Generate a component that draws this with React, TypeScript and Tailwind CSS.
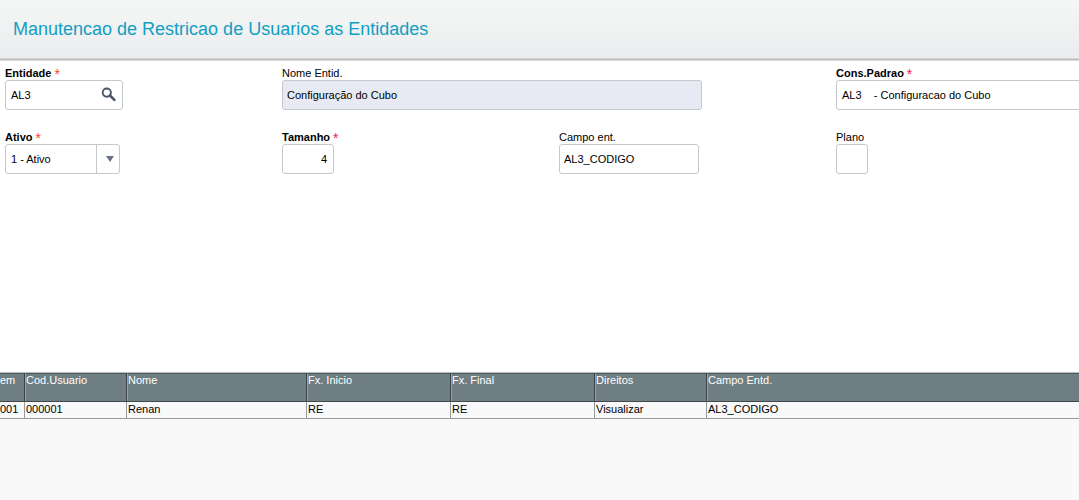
import type { ReactNode } from "react";

function Field({ label, star, bold, width, children }: { label: string; star?: string; bold?: boolean; width: string; children: ReactNode }) {
  return (
    <div className="h-16 w-[277px] shrink-0">
      <div className="flex h-[13px] gap-[3px] whitespace-pre leading-[13px]">
        <span className={bold ? "font-bold" : ""}>{label}</span>
        {star && <span className={`text-[14px] leading-[14px] ${star}`}>*</span>}
      </div>
      <div className={`flex h-[30px] items-center rounded-[3px] border border-[#c5c9ca] ${width}`}>{children}</div>
    </div>
  );
}

const columns = [
  { title: "em", value: "001", width: "w-[25px]", head: "", pad: "" },
  { title: "Cod.Usuario", value: "000001", width: "w-[102px]", head: "border-l", pad: "pl-px" },
  { title: "Nome", value: "Renan", width: "w-[180px]", head: "border-l", pad: "pl-px" },
  { title: "Fx. Inicio", value: "RE", width: "w-[144px]", head: "border-l", pad: "pl-px" },
  { title: "Fx. Final", value: "RE", width: "w-[144px]", head: "border-l", pad: "pl-px" },
  { title: "Direitos", value: "Visualizar", width: "w-[112px]", head: "border-l", pad: "pl-px" },
  { title: "Campo Entd.", value: "AL3_CODIGO", width: "w-[400px]", head: "border-l", pad: "pl-px" },
];

export default function App() {
  return (
    <div className="flex h-[500px] w-[1079px] flex-col overflow-hidden bg-white font-['Liberation_Sans',Arial,sans-serif] text-[11px] text-black">
      <header className="flex h-[61px] shrink-0 flex-col border-b border-[#dadada] bg-linear-to-b from-[#f5f7f6] to-[#ebecee]">
        <h1 className="flex-1 pl-[13px] pt-[18px] text-[18px] leading-[22px] text-[#129fc3]">Manutencao de Restricao de Usuarios as Entidades</h1>
        <div className="h-px bg-[#d5d6d7]" />
        <div className="h-px bg-[#bcbdbd]" />
      </header>
      <main className="h-[311px] shrink-0 pl-[5px] pt-[6px]">
        <div className="flex">
          <Field label="Entidade" star="text-[#ff3b20]" bold width="w-[118px] justify-between pl-[5px] pr-[5px]">
            <span>AL3</span>
            <svg className="h-4 w-4" viewBox="0 0 16 16" fill="none" stroke="#4b5768">
              <circle cx="5.8" cy="5.6" r="4.1" strokeWidth="1.9" />
              <path d="M9 8.5l4.4 4.4" strokeWidth="2.6" strokeLinecap="round" />
            </svg>
          </Field>
          <Field label="Nome Entid." width="w-[420px] bg-[#e7eaf2] pl-1">Configuração do Cubo</Field>
          <div className="w-[277px] shrink-0" />
          <Field label="Cons.Padrao" star="text-[#f5124d]" bold width="w-[277px] whitespace-pre pl-[5px]">{"AL3    - Configuracao do Cubo"}</Field>
        </div>
        <div className="flex">
          <Field label="Ativo" star="text-[#ff3b20]" bold width="w-[115px] pl-[5px]">
            <span className="flex-1">1 - Ativo</span>
            <span className="flex h-full w-[23px] items-center justify-center border-l border-[#c5c9ca] pl-[3px]">
              <svg className="h-[6px] w-[8px]" viewBox="0 0 8 6" fill="#687287"><path d="M0 0h8L4 6z" /></svg>
            </span>
          </Field>
          <Field label="Tamanho" star="text-[#f5124d]" bold width="w-[52px] justify-end pr-[6px]">4</Field>
          <Field label="Campo ent." width="w-[140px] pl-1">AL3_CODIGO</Field>
          <Field label="Plano" width="w-8">{null}</Field>
        </div>
      </main>
      <section className="flex-1 bg-[#f9f9f9]">
        <div className="flex h-[30px] border-b border-t border-b-[#42494b] border-t-[#b9bcbd] bg-[#6f7e82] text-white">
          {columns.map((c) => (
            <div key={c.title} className={`h-full shrink-0 border-r border-t border-l-[#98a3a6] border-r-[#3e4446] border-t-[#50595c] leading-[13px] ${c.width} ${c.head}`}>{c.title}</div>
          ))}
        </div>
        <div className="flex h-[17px] border-b border-[#969b9d]">
          {columns.map((c) => (
            <div key={c.title} className={`h-full shrink-0 border-r border-[#969b9d] leading-[15px] ${c.width} ${c.pad}`}>{c.value}</div>
          ))}
        </div>
      </section>
    </div>
  );
}
